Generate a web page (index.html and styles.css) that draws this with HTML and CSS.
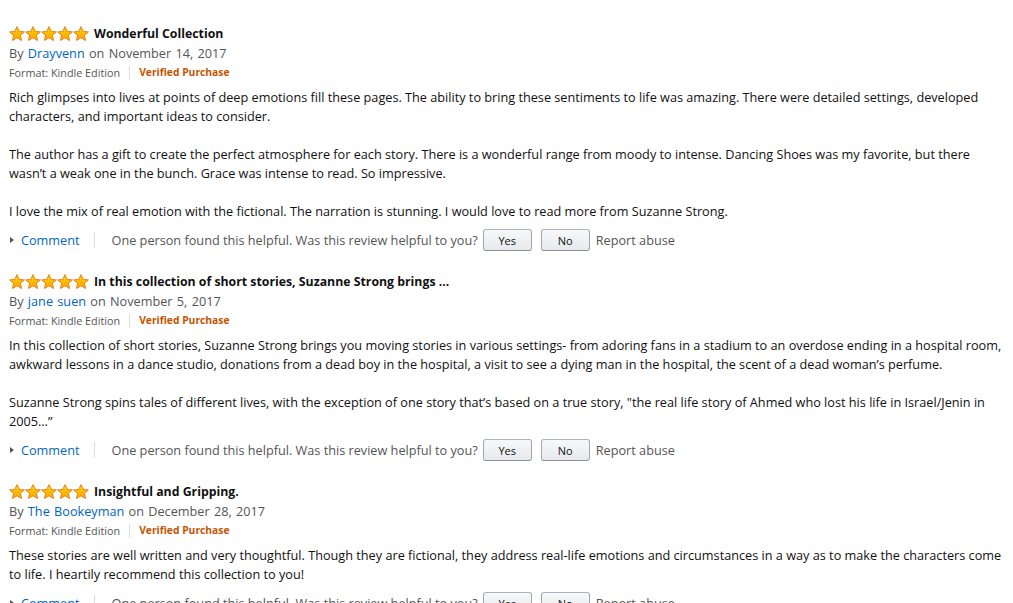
FILE: index.html
```html
<!DOCTYPE html>
<html>
<head>
<meta charset="utf-8">
<link rel="stylesheet" href="styles.css">
</head>
<body>
<svg width="0" height="0" class="defs">
  <defs>
    <linearGradient id="sg" x1="0" y1="0" x2="0" y2="1">
      <stop offset="0" stop-color="#ffce00"/>
      <stop offset="1" stop-color="#ffa700"/>
    </linearGradient>
    <symbol id="star" viewBox="0 0 16 16">
      <path d="M8 0.6 L10.2 5.4 L15.4 5.9 L11.4 9.3 L12.6 14.5 L8 11.8 L3.4 14.5 L4.6 9.3 L0.6 5.9 L5.8 5.4 Z" fill="url(#sg)" stroke="#e47911" stroke-width="0.9" stroke-linejoin="round"/>
    </symbol>
  </defs>
</svg>
<div class="reviews">

  <div class="review">
    <div class="title-row">
      <span class="stars"><svg><use href="#star"/></svg><svg><use href="#star"/></svg><svg><use href="#star"/></svg><svg><use href="#star"/></svg><svg><use href="#star"/></svg></span>
      <span class="title">Wonderful Collection</span>
    </div>
    <div class="byline">By <a class="link">Drayvenn</a> on November 14, 2017</div>
    <div class="meta"><span class="format">Format: Kindle Edition</span><span class="sep"></span><span class="verified">Verified Purchase</span></div>
    <div class="body">
      <p>Rich glimpses into lives at points of deep emotions fill these pages. The ability to bring these sentiments to life was amazing. There were detailed settings, developed characters, and important ideas to consider.</p>
      <p>The author has a gift to create the perfect atmosphere for each story. There is a wonderful range from moody to intense. Dancing Shoes was my favorite, but there wasn’t a weak one in the bunch. Grace was intense to read. So impressive.</p>
      <p>I love the mix of real emotion with the fictional. The narration is stunning. I would love to read more from Suzanne Strong.</p>
    </div>
    <div class="actions">
      <span class="comment"><span class="tri"></span><a class="link">Comment</a></span>
      <span class="vsep"></span>
      <span class="helpful">One person found this helpful. Was this review helpful to you?</span>
      <span class="btn">Yes</span>
      <span class="btn">No</span>
      <span class="report">Report abuse</span>
    </div>
  </div>

  <div class="review">
    <div class="title-row">
      <span class="stars"><svg><use href="#star"/></svg><svg><use href="#star"/></svg><svg><use href="#star"/></svg><svg><use href="#star"/></svg><svg><use href="#star"/></svg></span>
      <span class="title">In this collection of short stories, Suzanne Strong brings ...</span>
    </div>
    <div class="byline">By <a class="link">jane suen</a> on November 5, 2017</div>
    <div class="meta"><span class="format">Format: Kindle Edition</span><span class="sep"></span><span class="verified">Verified Purchase</span></div>
    <div class="body">
      <p>In this collection of short stories, Suzanne Strong brings you moving stories in various settings- from adoring fans in a stadium to an overdose ending in a hospital room, awkward lessons in a dance studio, donations from a dead boy in the hospital, a visit to see a dying man in the hospital, the scent of a dead woman’s perfume.</p>
      <p>Suzanne Strong spins tales of different lives, with the exception of one story that’s based on a true story, "the real life story of Ahmed who lost his life in Israel/Jenin in 2005…”</p>
    </div>
    <div class="actions">
      <span class="comment"><span class="tri"></span><a class="link">Comment</a></span>
      <span class="vsep"></span>
      <span class="helpful">One person found this helpful. Was this review helpful to you?</span>
      <span class="btn">Yes</span>
      <span class="btn">No</span>
      <span class="report">Report abuse</span>
    </div>
  </div>

  <div class="review">
    <div class="title-row">
      <span class="stars"><svg><use href="#star"/></svg><svg><use href="#star"/></svg><svg><use href="#star"/></svg><svg><use href="#star"/></svg><svg><use href="#star"/></svg></span>
      <span class="title">Insightful and Gripping.</span>
    </div>
    <div class="byline">By <a class="link">The Bookeyman</a> on December 28, 2017</div>
    <div class="meta"><span class="format">Format: Kindle Edition</span><span class="sep"></span><span class="verified">Verified Purchase</span></div>
    <div class="body">
      <p>These stories are well written and very thoughtful. Though they are fictional, they address real-life emotions and circumstances in a way as to make the characters come to life. I heartily recommend this collection to you!</p>
    </div>
    <div class="actions">
      <span class="comment"><span class="tri"></span><a class="link">Comment</a></span>
      <span class="vsep"></span>
      <span class="helpful">One person found this helpful. Was this review helpful to you?</span>
      <span class="btn">Yes</span>
      <span class="btn">No</span>
      <span class="report">Report abuse</span>
    </div>
  </div>

</div>
</body>
</html>
```
FILE: styles.css
```css
html, body {
  margin: 0;
  padding: 0;
  background: #fff;
}
body {
  font-family: "Open Sans", "Noto Sans", sans-serif;
  font-size: 12.7px;
  line-height: 19px;
  color: #111;
  overflow: hidden;
  height: 603px;
}
.defs {
  position: absolute;
  width: 0;
  height: 0;
}
.reviews {
  padding: 24px 0 0 9px;
  width: 995px;
}
.review {
  margin-bottom: 21px;
}
.title-row {
  display: flex;
  align-items: center;
  height: 19px;
}
.stars {
  display: flex;
  margin-right: 5px;
}
.stars svg {
  width: 16px;
  height: 16px;
  display: block;
}
.title {
  font-weight: 700;
  font-size: 12.3px;
}
.byline {
  margin-top: 1px;
  color: #555;
  word-spacing: 1px;
}
.link {
  color: #0066c0;
  text-decoration: none;
}
.meta {
  display: flex;
  align-items: center;
  font-size: 10.8px;
  line-height: 19px;
  margin-top: 0;
}
.format {
  color: #555;
}
.sep {
  width: 1px;
  height: 14px;
  background: #ddd;
  margin: 0 9px;
}
.verified {
  color: #c45500;
  font-weight: 700;
  font-size: 10.3px;
}
.body {
  margin-top: 6px;
}
.body p {
  margin: 0 0 19px 0;
}
.body p:last-child {
  margin-bottom: 0;
}
.actions {
  display: flex;
  align-items: center;
  height: 22px;
  margin-top: 8px;
  color: #555;
}
.comment {
  display: flex;
  align-items: center;
}
.tri {
  width: 0;
  height: 0;
  border-top: 3.5px solid transparent;
  border-bottom: 3.5px solid transparent;
  border-left: 4px solid #555;
  margin: 0 7px 0 1px;
}
.vsep {
  width: 1px;
  height: 16px;
  background: #ddd;
  margin: 0 17px 0 14px;
}
.helpful {
  margin-right: 5px;
}
.btn {
  box-sizing: border-box;
  width: 49px;
  height: 22px;
  display: flex;
  align-items: center;
  justify-content: center;
  border: 1px solid;
  border-color: #adb1b8 #a2a6ac #8d9096;
  border-radius: 3px;
  background: linear-gradient(to bottom, #f7f8fa, #e7e9ec);
  color: #111;
  font-size: 11px;
  margin-right: 9px;
}
.report {
  margin-left: -3px;
}
```
